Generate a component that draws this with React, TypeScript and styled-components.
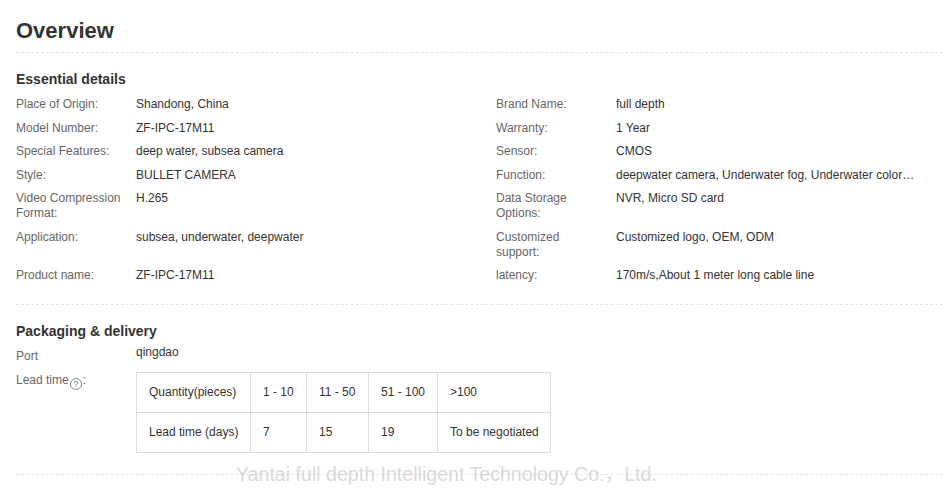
import React from 'react';
import styled, { createGlobalStyle } from 'styled-components';

const GlobalStyle = createGlobalStyle`
  html, body {
    margin: 0;
    padding: 0;
    background: #fff;
  }
  body {
    font-family: Arial, "Liberation Sans", "Noto Sans CJK SC", sans-serif;
    color: #333;
  }
`;

const Page = styled.div`
  position: relative;
  width: 927px;
  padding-left: 16px;
  height: 490px;
  overflow: hidden;
`;

const Title = styled.h1`
  margin: 0;
  padding: 16px 0 6px;
  font-size: 22px;
  line-height: 30px;
  font-weight: bold;
  color: #333;
  border-bottom: 1px dashed #e4e4e4;
`;

const Section = styled.section<{ $last?: boolean }>`
  padding-bottom: ${({ $last }) => ($last ? '21px' : '16px')};
  border-bottom: 1px dashed #e4e4e4;
`;

const SectionTitle = styled.h2`
  margin: 16px 0 4px;
  font-size: 14px;
  line-height: 20px;
  font-weight: bold;
  color: #333;
`;

const DetailGrid = styled.div`
  display: grid;
  grid-template-columns: 480px 1fr;
`;

const Item = styled.div`
  display: flex;
  padding: 4px 0 4.5px;
  font-size: 12px;
  line-height: 15px;
`;

const Label = styled.div`
  width: 110px;
  margin-right: 10px;
  color: #666;
  flex-shrink: 0;
`;

const Value = styled.div`
  width: 300px;
  color: #333;
  white-space: nowrap;
  overflow: hidden;
  text-overflow: ellipsis;
`;

const PackRow = styled.div<{ $gap?: number }>`
  display: flex;
  font-size: 12px;
  line-height: 15px;
  padding-bottom: ${({ $gap }) => $gap ?? 0}px;
`;

const PackLabel = styled.div<{ $top: number }>`
  width: 120px;
  flex-shrink: 0;
  padding-top: ${({ $top }) => $top}px;
  color: #666;
`;

const Help = styled.span`
  display: inline-block;
  width: 10px;
  height: 10px;
  margin: 0 1px;
  border: 1px solid #888;
  border-radius: 50%;
  font-size: 9px;
  line-height: 10px;
  text-align: center;
  color: #777;
  vertical-align: -3px;
`;

const LeadTable = styled.table`
  border-collapse: collapse;
  font-size: 12px;
  color: #333;
`;

const Cell = styled.td<{ $w: number }>`
  width: ${({ $w }) => $w}px;
  box-sizing: border-box;
  height: 40px;
  padding: 0 0 0 12px;
  border: 1px solid #dcdcdc;
  white-space: nowrap;
`;

const Watermark = styled.div`
  position: absolute;
  left: 236px;
  top: 462px;
  font-size: 19.6px;
  line-height: 24px;
  color: rgba(200, 200, 200, 0.7);
  white-space: nowrap;
  pointer-events: none;
`;

type Pair = [string, string];

const rows: [Pair, Pair][] = [
  [['Place of Origin:', 'Shandong, China'], ['Brand Name:', 'full depth']],
  [['Model Number:', 'ZF-IPC-17M11'], ['Warranty:', '1 Year']],
  [['Special Features:', 'deep water, subsea camera'], ['Sensor:', 'CMOS']],
  [['Style:', 'BULLET CAMERA'], ['Function:', 'deepwater camera, Underwater fog, Underwater color correction']],
  [['Video Compression Format:', 'H.265'], ['Data Storage Options:', 'NVR, Micro SD card']],
  [['Application:', 'subsea, underwater, deepwater'], ['Customized support:', 'Customized logo, OEM, ODM']],
  [['Product name:', 'ZF-IPC-17M11'], ['latency:', '170m/s,About 1 meter long cable line']],
];

const widths = [114, 56, 62, 69, 113];
const quantity = ['Quantity(pieces)', '1 - 10', '11 - 50', '51 - 100', '>100'];
const leadDays = ['Lead time (days)', '7', '15', '19', 'To be negotiated'];

export default function App() {
  return (
    <>
      <GlobalStyle />
      <Page>
        <Title>Overview</Title>
        <Section>
          <SectionTitle>Essential details</SectionTitle>
          <DetailGrid>
            {rows.flat().map(([label, value]) => (
              <Item key={label}>
                <Label>{label}</Label>
                <Value>{value}</Value>
              </Item>
            ))}
          </DetailGrid>
        </Section>
        <Section $last>
          <SectionTitle>Packaging &amp; delivery</SectionTitle>
          <PackRow $gap={8.5}>
            <PackLabel $top={4}>Port</PackLabel>
            <div>qingdao</div>
          </PackRow>
          <PackRow>
            <PackLabel $top={1}>
              Lead time<Help>?</Help>:
            </PackLabel>
            <LeadTable>
              <tbody>
                {[quantity, leadDays].map((row) => (
                  <tr key={row[0]}>
                    {row.map((txt, i) => (
                      <Cell key={i} $w={widths[i]}>{txt}</Cell>
                    ))}
                  </tr>
                ))}
              </tbody>
            </LeadTable>
          </PackRow>
        </Section>
        <Watermark>Yantai full depth Intelligent Technology Co.，Ltd.</Watermark>
      </Page>
    </>
  );
}
